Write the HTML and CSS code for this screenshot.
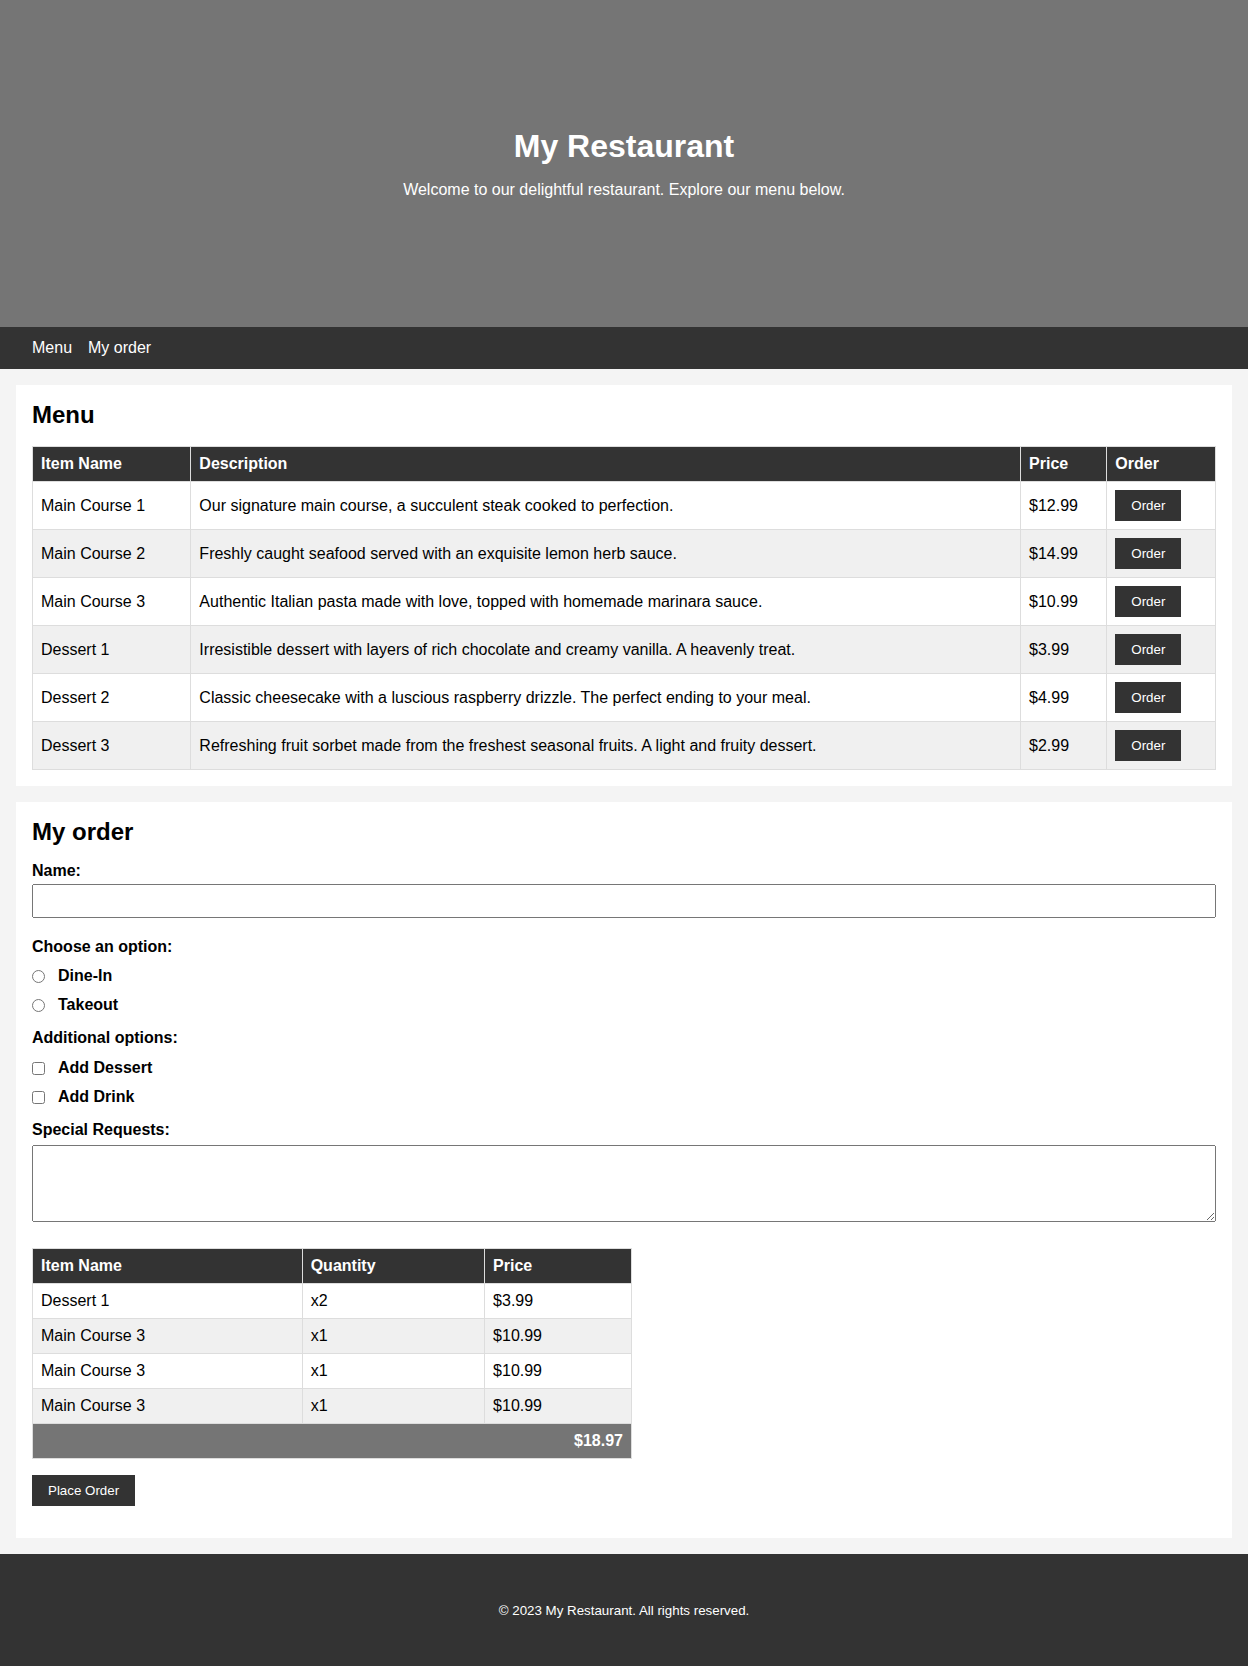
FILE: index.html
```html
<!DOCTYPE html>
<html lang="en">
<head>
<meta charset="utf-8">
<title>My Restaurant</title>
<link rel="stylesheet" href="styles.css">
</head>
<body>
<header class="hero">
  <h1 class="hero-title">My Restaurant</h1>
  <p class="hero-sub">Welcome to our delightful restaurant. Explore our menu below.</p>
</header>
<nav class="nav">
  <a class="nav-link" href="#menu">Menu</a>
  <a class="nav-link" href="#order">My order</a>
</nav>
<main class="main">
  <section class="card" id="menu">
    <h2 class="card-title">Menu</h2>
    <table class="table">
      <thead>
        <tr><th>Item Name</th><th>Description</th><th>Price</th><th>Order</th></tr>
      </thead>
      <tbody>
        <tr><td>Main Course 1</td><td>Our signature main course, a succulent steak cooked to perfection.</td><td>$12.99</td><td><button class="btn">Order</button></td></tr>
        <tr><td>Main Course 2</td><td>Freshly caught seafood served with an exquisite lemon herb sauce.</td><td>$14.99</td><td><button class="btn">Order</button></td></tr>
        <tr><td>Main Course 3</td><td>Authentic Italian pasta made with love, topped with homemade marinara sauce.</td><td>$10.99</td><td><button class="btn">Order</button></td></tr>
        <tr><td>Dessert 1</td><td>Irresistible dessert with layers of rich chocolate and creamy vanilla. A heavenly treat.</td><td>$3.99</td><td><button class="btn">Order</button></td></tr>
        <tr><td>Dessert 2</td><td>Classic cheesecake with a luscious raspberry drizzle. The perfect ending to your meal.</td><td>$4.99</td><td><button class="btn">Order</button></td></tr>
        <tr><td>Dessert 3</td><td>Refreshing fruit sorbet made from the freshest seasonal fruits. A light and fruity dessert.</td><td>$2.99</td><td><button class="btn">Order</button></td></tr>
      </tbody>
    </table>
  </section>
  <section class="card" id="order">
    <h2 class="card-title">My order</h2>
    <form class="form">
      <label class="field-label" for="name">Name:</label>
      <input class="text-input" type="text" id="name">
      <div class="group-label">Choose an option:</div>
      <label class="option"><input class="choice" type="radio" name="mode"><span>Dine-In</span></label>
      <label class="option option-last"><input class="choice" type="radio" name="mode"><span>Takeout</span></label>
      <div class="group-label group-label-2">Additional options:</div>
      <label class="option"><input class="choice" type="checkbox"><span>Add Dessert</span></label>
      <label class="option option-last"><input class="choice" type="checkbox"><span>Add Drink</span></label>
      <label class="field-label field-label-req" for="req">Special Requests:</label>
      <textarea class="textarea" id="req"></textarea>
      <table class="table order-table">
        <thead>
          <tr><th>Item Name</th><th>Quantity</th><th>Price</th></tr>
        </thead>
        <tbody>
          <tr><td>Dessert 1</td><td>x2</td><td>$3.99</td></tr>
          <tr><td>Main Course 3</td><td>x1</td><td>$10.99</td></tr>
          <tr><td>Main Course 3</td><td>x1</td><td>$10.99</td></tr>
          <tr><td>Main Course 3</td><td>x1</td><td>$10.99</td></tr>
        </tbody>
        <tfoot>
          <tr><td class="total" colspan="3">$18.97</td></tr>
        </tfoot>
      </table>
      <button class="btn btn-place" type="button">Place Order</button>
    </form>
  </section>
</main>
<footer class="footer">
  <p class="footer-text">© 2023 My Restaurant. All rights reserved.</p>
</footer>
</body>
</html>
```
FILE: styles.css
```css
* { box-sizing: border-box; }
html, body { margin: 0; padding: 0; }
body {
  font-family: "Liberation Sans", Arial, sans-serif;
  font-size: 16px;
  color: #000;
  background: #f4f4f4;
}
.hero {
  height: 327px;
  background: #757575;
  color: #fff;
  display: flex;
  flex-direction: column;
  align-items: center;
  justify-content: center;
  text-align: center;
}
.hero-title {
  margin: 0 0 16px;
  font-size: 32px;
  font-weight: bold;
}
.hero-sub { margin: 0; font-size: 16px; }
.nav {
  height: 42px;
  background: #333;
  display: flex;
  align-items: center;
  gap: 16px;
  padding: 0 32px;
}
.nav-link { color: #fff; text-decoration: none; font-size: 16px; }
.main { padding: 16px; }
.card {
  background: #fff;
  padding: 16px;
  margin-bottom: 16px;
}
.card:last-child { margin-bottom: 0; }
.card-title {
  margin: 0 0 17px;
  font-size: 24px;
  font-weight: bold;
}
.table {
  width: 100%;
  border-collapse: collapse;
}
.table th, .table td {
  border: 1px solid #ddd;
  padding: 8px;
  text-align: left;
  vertical-align: middle;
}
.table th {
  background: #333;
  color: #fff;
  font-weight: bold;
}
.table tbody tr:nth-child(even) td { background: #f0f0f0; }
.btn {
  background: #333;
  color: #fff;
  border: none;
  border-radius: 0;
  padding: 8px 16px;
  font-family: "Liberation Sans", Arial, sans-serif;
  font-size: 13.333px;
  line-height: 15px;
  display: inline-block;
  vertical-align: middle;
}
.form { margin: 0; padding-bottom: 16px; }
.field-label, .group-label {
  display: block;
  font-weight: bold;
  line-height: 18px;
}
.field-label { margin-bottom: 4px; }
.card-title + .form .field-label:first-child { margin-top: -1px; }
.text-input {
  display: block;
  width: 100%;
  height: 34px;
  padding: 8px;
  margin: 0 0 20px;
  font-size: 16px;
}
.group-label { margin-bottom: 11px; }
.group-label-2 { margin-bottom: 12px; }
.option {
  display: flex;
  align-items: center;
  height: 18px;
  font-weight: bold;
  margin-bottom: 11px;
}
.option-last { margin-bottom: 15px; }
.choice { margin: 0 13px 0 0; width: 13px; height: 13px; }
.field-label-req { margin-bottom: 6px; }
.textarea {
  display: block;
  width: 100%;
  height: 77px;
  margin: 0 0 26px;
  font-family: "Liberation Mono", monospace;
}
.order-table { width: 600px; }
.table td.total {
  background: #757575;
  color: #fff;
  font-weight: bold;
  text-align: right;
}
.btn-place { margin-top: 16px; display: block; }
.footer {
  background: #333;
  color: #fff;
  text-align: center;
  padding: 49px 16px;
}
.footer-text { margin: 0; font-size: 13.333px; line-height: 16px; }
```
